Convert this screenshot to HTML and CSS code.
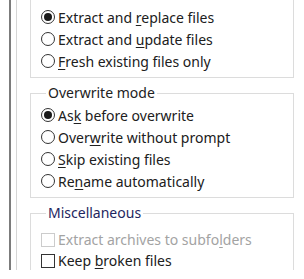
FILE: index.html
```html
<!DOCTYPE html>
<html>
<head>
<meta charset="utf-8">
<link rel="stylesheet" href="styles.css">
</head>
<body>
<div class="frame">
  <div class="rail-dark"></div>
  <div class="rail-light"></div>
  <div class="groups">
    <fieldset class="group group-first">
      <label class="opt"><input type="radio" name="ex" checked><span>Extract and <u>r</u>eplace files</span></label>
      <label class="opt"><input type="radio" name="ex"><span>Extract and <u>u</u>pdate files</span></label>
      <label class="opt"><input type="radio" name="ex"><span><u>F</u>resh existing files only</span></label>
    </fieldset>
    <fieldset class="group group-over">
      <legend>Overwrite mode</legend>
      <label class="opt"><input type="radio" name="ow" checked><span>As<u>k</u> before overwrite</span></label>
      <label class="opt"><input type="radio" name="ow"><span>Over<u>w</u>rite without prompt</span></label>
      <label class="opt"><input type="radio" name="ow"><span><u>S</u>kip existing files</span></label>
      <label class="opt"><input type="radio" name="ow"><span>Re<u>n</u>ame automatically</span></label>
    </fieldset>
    <fieldset class="group group-misc">
      <legend class="legend-focus">Miscellaneous</legend>
      <label class="opt opt-check disabled"><input type="checkbox" disabled><span>Extract archives to subfo<u>l</u>ders</span></label>
      <label class="opt opt-check"><input type="checkbox"><span>Keep <u>b</u>roken files</span></label>
    </fieldset>
  </div>
</div>
</body>
</html>
```

FILE: styles.css
```css
html, body {
  margin: 0;
  padding: 0;
  background: #ffffff;
}

body {
  font-family: "Noto Sans", "Open Sans", sans-serif;
  font-size: 14px;
  color: #202020;
}

.frame {
  display: flex;
  height: 270px;
  overflow: hidden;
}

.rail-dark {
  margin-left: 9px;
  width: 2px;
  background: #7c7c7c;
  flex: none;
}

.rail-light {
  margin-left: 5px;
  width: 1px;
  background: #d6d6d6;
  flex: none;
}

.groups {
  margin-left: 13px;
  width: 264px;
  display: flex;
  flex-direction: column;
  gap: 7px;
  flex: none;
}

.group {
  margin: 0;
  border: 1px solid #dcdcdc;
  padding: 0 10px 5px 10px;
  display: flex;
  flex-direction: column;
  min-width: 0;
}

.group legend {
  padding: 0 2px;
  margin-left: 5px;
  line-height: 16px;
  height: 16px;
  color: #222222;
}

.group .legend-focus {
  color: #1e2660;
}

.group-first {
  border-top: none;
  padding-top: 6px;
}

.group-over {
  padding-top: 3px;
}

.group-misc {
  padding-top: 8px;
}

.opt {
  display: flex;
  align-items: center;
  height: 22px;
  white-space: nowrap;
}

.opt-check {
  height: 21px;
}

.opt input {
  appearance: none;
  -webkit-appearance: none;
  margin: 0 3px 0 0;
  width: 14px;
  height: 14px;
  border: 1px solid #333333;
  background: #ffffff;
  box-sizing: border-box;
  flex: none;
  display: grid;
  place-items: center;
}

.opt input[type="radio"] {
  border-radius: 50%;
}

.opt input[type="radio"]:checked::after {
  content: "";
  width: 8px;
  height: 8px;
  border-radius: 50%;
  background: #1a1a1a;
}

.opt.disabled {
  color: #a3a3a3;
}

.opt.disabled input {
  border-color: #cccccc;
}

u {
  text-underline-offset: 2px;
}
```
